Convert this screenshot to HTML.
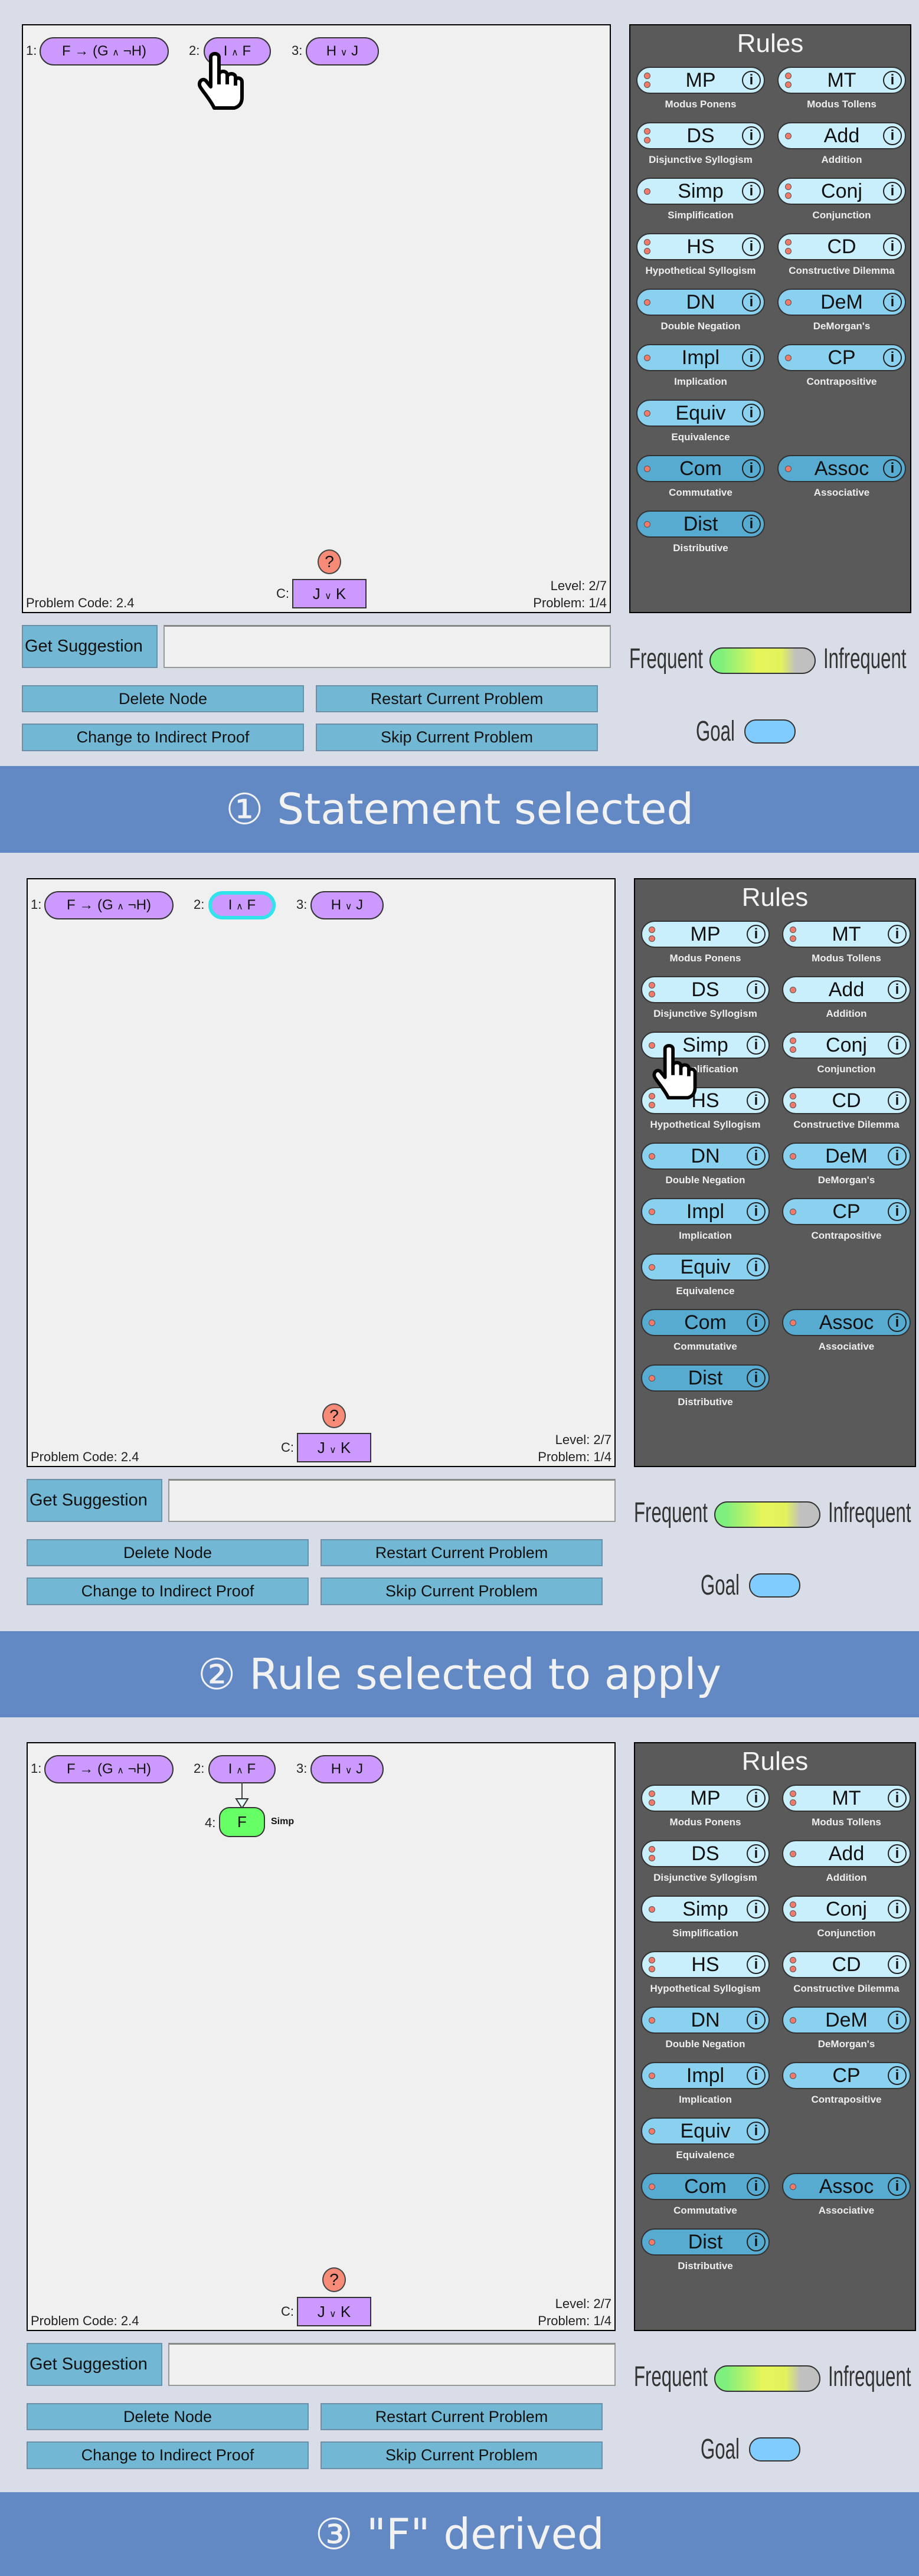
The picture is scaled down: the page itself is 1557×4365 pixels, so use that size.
<!DOCTYPE html>
<html><head><meta charset="utf-8"><style>
*{box-sizing:border-box;margin:0;padding:0}
body{width:1557px;height:4365px;background:#d8dde7;position:relative;overflow:hidden;font-family:"Liberation Sans",Arial,sans-serif;color:#111}
.p{position:absolute;width:1520px;height:1240px}
.cv{position:absolute;left:0;top:0;width:998px;height:998px;background:#f0f0f0;border:2px solid #000}
.rp{position:absolute;left:1029px;top:0;width:478px;height:998px;background:#5a5a5a;border:2px solid #000}
.ttl{position:absolute;left:0;width:100%;top:6px;text-align:center;color:#f4f4f4;font-size:44px}
.rb{position:absolute;width:218px;height:46px;border:2px solid #333;border-radius:23px;background:#c9eefc;text-align:center;font-size:34px;line-height:42px}
.m{background:#89d1ef}.d{background:#57abd0}
.dt{position:absolute;left:11px;width:11px;height:11px;border-radius:50%;background:#f27a6a;border:1.5px solid #555}
.i{position:absolute;right:5px;top:5px;width:32px;height:32px;border:2px solid #222;border-radius:50%;font-size:24px;line-height:28px;text-align:center;font-weight:bold}
.rl{position:absolute;width:218px;text-align:center;color:#eee;font-size:17px;font-weight:bold;white-space:nowrap}
.nd{position:absolute;top:20px;height:48px;border:2px solid #333;border-radius:24px;background:#cc99ff;font-size:24px;line-height:44px;text-align:center}
.lb{position:absolute;font-size:22px;color:#222}
.sm{font-size:16px}
.bt{position:absolute;background:#72b8d4;border:2px solid #6d8fa8;font-size:27px;text-align:center;line-height:42px}
.fq{position:absolute;font-size:48px;line-height:48px;color:#333;transform:scaleX(.65);transform-origin:left top;white-space:nowrap}
.bn{position:absolute;left:0;width:1557px;background:#6389c5;color:#f2f2f2;font-family:"DejaVu Sans",sans-serif;font-size:72px;text-align:center}
.hand{position:absolute}
</style></head><body>

<!-- PANEL TEMPLATE 1 -->
<div class="p" style="left:37px;top:41px">
<div class="cv">
<div class="lb" style="left:5px;top:30px">1:</div><div class="nd" style="left:28px;width:219px">F → (G <span class="sm">∧</span> ¬H)</div>
<div class="lb" style="left:281px;top:30px">2:</div><div class="nd" style="left:306px;width:114px">I <span class="sm">∧</span> F</div>
<div class="lb" style="left:455px;top:30px">3:</div><div class="nd" style="left:479px;width:124px">H <span class="sm">∨</span> J</div>
<div style="position:absolute;left:499px;top:888px;width:40px;height:42px;border-radius:50%;background:#f88a78;border:2px solid #444;text-align:center;font-size:28px;line-height:38px">?</div>
<div class="lb" style="left:429px;top:950px">C:</div>
<div style="position:absolute;left:456px;top:938px;width:126px;height:50px;background:#cc99ff;border:2px solid #333;text-align:center;font-size:26px;line-height:46px">J <span class="sm">∨</span> K</div>
<div class="lb" style="left:5px;top:966px">Problem Code: 2.4</div>
<div class="lb" style="right:5px;top:937px">Level: 2/7</div>
<div class="lb" style="right:5px;top:966px">Problem: 1/4</div>
</div>
<div class="rp">
<div class="ttl">Rules</div>
<div class="rb" style="left:10px;top:70px"><div class="dt" style="top:8px"></div><div class="dt" style="top:23px"></div>MP<div class="i">i</div></div><div class="rl" style="left:10px;top:124px">Modus Ponens</div>
<div class="rb" style="left:249px;top:70px"><div class="dt" style="top:8px"></div><div class="dt" style="top:23px"></div>MT<div class="i">i</div></div><div class="rl" style="left:249px;top:124px">Modus Tollens</div>
<div class="rb" style="left:10px;top:164px"><div class="dt" style="top:8px"></div><div class="dt" style="top:23px"></div>DS<div class="i">i</div></div><div class="rl" style="left:10px;top:218px">Disjunctive Syllogism</div>
<div class="rb" style="left:249px;top:164px"><div class="dt" style="top:16px"></div>Add<div class="i">i</div></div><div class="rl" style="left:249px;top:218px">Addition</div>
<div class="rb" style="left:10px;top:258px"><div class="dt" style="top:16px"></div>Simp<div class="i">i</div></div><div class="rl" style="left:10px;top:312px">Simplification</div>
<div class="rb" style="left:249px;top:258px"><div class="dt" style="top:8px"></div><div class="dt" style="top:23px"></div>Conj<div class="i">i</div></div><div class="rl" style="left:249px;top:312px">Conjunction</div>
<div class="rb" style="left:10px;top:352px"><div class="dt" style="top:8px"></div><div class="dt" style="top:23px"></div>HS<div class="i">i</div></div><div class="rl" style="left:10px;top:406px">Hypothetical Syllogism</div>
<div class="rb" style="left:249px;top:352px"><div class="dt" style="top:8px"></div><div class="dt" style="top:23px"></div>CD<div class="i">i</div></div><div class="rl" style="left:249px;top:406px">Constructive Dilemma</div>
<div class="rb m" style="left:10px;top:446px"><div class="dt" style="top:16px"></div>DN<div class="i">i</div></div><div class="rl" style="left:10px;top:500px">Double Negation</div>
<div class="rb m" style="left:249px;top:446px"><div class="dt" style="top:16px"></div>DeM<div class="i">i</div></div><div class="rl" style="left:249px;top:500px">DeMorgan's</div>
<div class="rb m" style="left:10px;top:540px"><div class="dt" style="top:16px"></div>Impl<div class="i">i</div></div><div class="rl" style="left:10px;top:594px">Implication</div>
<div class="rb m" style="left:249px;top:540px"><div class="dt" style="top:16px"></div>CP<div class="i">i</div></div><div class="rl" style="left:249px;top:594px">Contrapositive</div>
<div class="rb m" style="left:10px;top:634px"><div class="dt" style="top:16px"></div>Equiv<div class="i">i</div></div><div class="rl" style="left:10px;top:688px">Equivalence</div>
<div class="rb d" style="left:10px;top:728px"><div class="dt" style="top:16px"></div>Com<div class="i">i</div></div><div class="rl" style="left:10px;top:782px">Commutative</div>
<div class="rb d" style="left:249px;top:728px"><div class="dt" style="top:16px"></div>Assoc<div class="i">i</div></div><div class="rl" style="left:249px;top:782px">Associative</div>
<div class="rb d" style="left:10px;top:822px"><div class="dt" style="top:16px"></div>Dist<div class="i">i</div></div><div class="rl" style="left:10px;top:876px">Distributive</div>
</div>
<div class="bt" style="left:0;top:1018px;width:230px;height:73px;line-height:69px;font-size:29px;text-align:left;padding-left:3px">Get Suggestion</div>
<div style="position:absolute;left:240px;top:1018px;width:758px;height:73px;background:#f0f0f0;border:2px solid #999;border-top:3px solid #888"></div>
<div class="bt" style="left:0;top:1120px;width:478px;height:46px">Delete Node</div>
<div class="bt" style="left:498px;top:1120px;width:478px;height:46px">Restart Current Problem</div>
<div class="bt" style="left:0;top:1185px;width:478px;height:47px">Change to Indirect Proof</div>
<div class="bt" style="left:498px;top:1185px;width:478px;height:47px">Skip Current Problem</div>
<div class="fq" style="left:1029px;top:1052px">Frequent</div>
<div style="position:absolute;left:1165px;top:1056px;width:180px;height:45px;border:2px solid #333;border-radius:23px;background:linear-gradient(to right,#7ef07e 10%,#e6f55a 45%,#e2f25c 68%,#c0c0c0 82%)"></div>
<div class="fq" style="left:1358px;top:1052px">Infrequent</div>
<div class="fq" style="left:1142px;top:1175px">Goal</div>
<div style="position:absolute;left:1224px;top:1178px;width:87px;height:41px;background:#80ccff;border:2px solid #333;border-radius:20px"></div>
<svg class="hand" style="left:296px;top:46px" width="82" height="100" viewBox="0 0 82 100"><path d="M24,10 C24,2 38,2 38,10 L38,40 C38,32 52,32 52,40 L52,44 C52,36 66,36 66,44 L66,50 C66,43 77,44 77,52 L77,78 C77,88 72,94 64,96 L30,96 C22,80 12,70 6,60 C2,52 10,44 16,50 L24,60 Z M38,40 L38,56 M52,44 L52,56 M66,50 L66,58" fill="#fff" stroke="#000" stroke-width="6" stroke-linejoin="round"/></svg>
</div>

<div class="bn" style="top:1298px;height:147px;line-height:147px">① Statement selected</div>

<!-- PANEL 2 -->
<div class="p" style="left:45px;top:1488px">
<div class="cv">
<div class="lb" style="left:5px;top:30px">1:</div><div class="nd" style="left:28px;width:219px">F → (G <span class="sm">∧</span> ¬H)</div>
<div class="lb" style="left:281px;top:30px">2:</div><div class="nd" style="left:306px;width:114px;border:6px solid #33e3ec;line-height:36px">I <span class="sm">∧</span> F</div>
<div class="lb" style="left:455px;top:30px">3:</div><div class="nd" style="left:479px;width:124px">H <span class="sm">∨</span> J</div>
<div style="position:absolute;left:499px;top:888px;width:40px;height:42px;border-radius:50%;background:#f88a78;border:2px solid #444;text-align:center;font-size:28px;line-height:38px">?</div>
<div class="lb" style="left:429px;top:950px">C:</div>
<div style="position:absolute;left:456px;top:938px;width:126px;height:50px;background:#cc99ff;border:2px solid #333;text-align:center;font-size:26px;line-height:46px">J <span class="sm">∨</span> K</div>
<div class="lb" style="left:5px;top:966px">Problem Code: 2.4</div>
<div class="lb" style="right:5px;top:937px">Level: 2/7</div>
<div class="lb" style="right:5px;top:966px">Problem: 1/4</div>
</div>
<div class="rp">
<div class="ttl">Rules</div>
<div class="rb" style="left:10px;top:70px"><div class="dt" style="top:8px"></div><div class="dt" style="top:23px"></div>MP<div class="i">i</div></div><div class="rl" style="left:10px;top:124px">Modus Ponens</div>
<div class="rb" style="left:249px;top:70px"><div class="dt" style="top:8px"></div><div class="dt" style="top:23px"></div>MT<div class="i">i</div></div><div class="rl" style="left:249px;top:124px">Modus Tollens</div>
<div class="rb" style="left:10px;top:164px"><div class="dt" style="top:8px"></div><div class="dt" style="top:23px"></div>DS<div class="i">i</div></div><div class="rl" style="left:10px;top:218px">Disjunctive Syllogism</div>
<div class="rb" style="left:249px;top:164px"><div class="dt" style="top:16px"></div>Add<div class="i">i</div></div><div class="rl" style="left:249px;top:218px">Addition</div>
<div class="rb" style="left:10px;top:258px"><div class="dt" style="top:16px"></div>Simp<div class="i">i</div></div><div class="rl" style="left:10px;top:312px">Simplification</div>
<div class="rb" style="left:249px;top:258px"><div class="dt" style="top:8px"></div><div class="dt" style="top:23px"></div>Conj<div class="i">i</div></div><div class="rl" style="left:249px;top:312px">Conjunction</div>
<div class="rb" style="left:10px;top:352px"><div class="dt" style="top:8px"></div><div class="dt" style="top:23px"></div>HS<div class="i">i</div></div><div class="rl" style="left:10px;top:406px">Hypothetical Syllogism</div>
<div class="rb" style="left:249px;top:352px"><div class="dt" style="top:8px"></div><div class="dt" style="top:23px"></div>CD<div class="i">i</div></div><div class="rl" style="left:249px;top:406px">Constructive Dilemma</div>
<div class="rb m" style="left:10px;top:446px"><div class="dt" style="top:16px"></div>DN<div class="i">i</div></div><div class="rl" style="left:10px;top:500px">Double Negation</div>
<div class="rb m" style="left:249px;top:446px"><div class="dt" style="top:16px"></div>DeM<div class="i">i</div></div><div class="rl" style="left:249px;top:500px">DeMorgan's</div>
<div class="rb m" style="left:10px;top:540px"><div class="dt" style="top:16px"></div>Impl<div class="i">i</div></div><div class="rl" style="left:10px;top:594px">Implication</div>
<div class="rb m" style="left:249px;top:540px"><div class="dt" style="top:16px"></div>CP<div class="i">i</div></div><div class="rl" style="left:249px;top:594px">Contrapositive</div>
<div class="rb m" style="left:10px;top:634px"><div class="dt" style="top:16px"></div>Equiv<div class="i">i</div></div><div class="rl" style="left:10px;top:688px">Equivalence</div>
<div class="rb d" style="left:10px;top:728px"><div class="dt" style="top:16px"></div>Com<div class="i">i</div></div><div class="rl" style="left:10px;top:782px">Commutative</div>
<div class="rb d" style="left:249px;top:728px"><div class="dt" style="top:16px"></div>Assoc<div class="i">i</div></div><div class="rl" style="left:249px;top:782px">Associative</div>
<div class="rb d" style="left:10px;top:822px"><div class="dt" style="top:16px"></div>Dist<div class="i">i</div></div><div class="rl" style="left:10px;top:876px">Distributive</div>
</div>
<div class="bt" style="left:0;top:1018px;width:230px;height:73px;line-height:69px;font-size:29px;text-align:left;padding-left:3px">Get Suggestion</div>
<div style="position:absolute;left:240px;top:1018px;width:758px;height:73px;background:#f0f0f0;border:2px solid #999;border-top:3px solid #888"></div>
<div class="bt" style="left:0;top:1120px;width:478px;height:46px">Delete Node</div>
<div class="bt" style="left:498px;top:1120px;width:478px;height:46px">Restart Current Problem</div>
<div class="bt" style="left:0;top:1185px;width:478px;height:47px">Change to Indirect Proof</div>
<div class="bt" style="left:498px;top:1185px;width:478px;height:47px">Skip Current Problem</div>
<div class="fq" style="left:1029px;top:1052px">Frequent</div>
<div style="position:absolute;left:1165px;top:1056px;width:180px;height:45px;border:2px solid #333;border-radius:23px;background:linear-gradient(to right,#7ef07e 10%,#e6f55a 45%,#e2f25c 68%,#c0c0c0 82%)"></div>
<div class="fq" style="left:1358px;top:1052px">Infrequent</div>
<div class="fq" style="left:1142px;top:1175px">Goal</div>
<div style="position:absolute;left:1224px;top:1178px;width:87px;height:41px;background:#80ccff;border:2px solid #333;border-radius:20px"></div>
<svg class="hand" style="left:1057px;top:280px" width="82" height="96" viewBox="0 0 82 100"><path d="M24,10 C24,2 38,2 38,10 L38,40 C38,32 52,32 52,40 L52,44 C52,36 66,36 66,44 L66,50 C66,43 77,44 77,52 L77,78 C77,88 72,94 64,96 L30,96 C22,80 12,70 6,60 C2,52 10,44 16,50 L24,60 Z M38,40 L38,56 M52,44 L52,56 M66,50 L66,58" fill="#fff" stroke="#000" stroke-width="6" stroke-linejoin="round"/></svg>
</div>

<div class="bn" style="top:2764px;height:146px;line-height:146px">② Rule selected to apply</div>

<!-- PANEL 3 -->
<div class="p" style="left:45px;top:2952px">
<div class="cv">
<div class="lb" style="left:5px;top:30px">1:</div><div class="nd" style="left:28px;width:219px">F → (G <span class="sm">∧</span> ¬H)</div>
<div class="lb" style="left:281px;top:30px">2:</div><div class="nd" style="left:306px;width:114px">I <span class="sm">∧</span> F</div>
<div class="lb" style="left:455px;top:30px">3:</div><div class="nd" style="left:479px;width:124px">H <span class="sm">∨</span> J</div>
<svg style="position:absolute;left:340px;top:66px" width="50" height="48" viewBox="0 0 50 48"><line x1="23" y1="0" x2="23" y2="28" stroke="#444" stroke-width="2"/><path d="M13,28 L33,28 L23,44 Z" fill="#e8ffff" stroke="#333" stroke-width="2"/></svg>
<div class="lb" style="left:300px;top:122px">4:</div>
<div style="position:absolute;left:324px;top:108px;width:78px;height:51px;border:2px solid #333;border-radius:18px;background:#66ff66;text-align:center;font-size:26px;line-height:47px">F</div>
<div style="position:absolute;left:412px;top:124px;font-size:16px;font-weight:bold">Simp</div>
<div style="position:absolute;left:499px;top:888px;width:40px;height:42px;border-radius:50%;background:#f88a78;border:2px solid #444;text-align:center;font-size:28px;line-height:38px">?</div>
<div class="lb" style="left:429px;top:950px">C:</div>
<div style="position:absolute;left:456px;top:938px;width:126px;height:50px;background:#cc99ff;border:2px solid #333;text-align:center;font-size:26px;line-height:46px">J <span class="sm">∨</span> K</div>
<div class="lb" style="left:5px;top:966px">Problem Code: 2.4</div>
<div class="lb" style="right:5px;top:937px">Level: 2/7</div>
<div class="lb" style="right:5px;top:966px">Problem: 1/4</div>
</div>
<div class="rp">
<div class="ttl">Rules</div>
<div class="rb" style="left:10px;top:70px"><div class="dt" style="top:8px"></div><div class="dt" style="top:23px"></div>MP<div class="i">i</div></div><div class="rl" style="left:10px;top:124px">Modus Ponens</div>
<div class="rb" style="left:249px;top:70px"><div class="dt" style="top:8px"></div><div class="dt" style="top:23px"></div>MT<div class="i">i</div></div><div class="rl" style="left:249px;top:124px">Modus Tollens</div>
<div class="rb" style="left:10px;top:164px"><div class="dt" style="top:8px"></div><div class="dt" style="top:23px"></div>DS<div class="i">i</div></div><div class="rl" style="left:10px;top:218px">Disjunctive Syllogism</div>
<div class="rb" style="left:249px;top:164px"><div class="dt" style="top:16px"></div>Add<div class="i">i</div></div><div class="rl" style="left:249px;top:218px">Addition</div>
<div class="rb" style="left:10px;top:258px"><div class="dt" style="top:16px"></div>Simp<div class="i">i</div></div><div class="rl" style="left:10px;top:312px">Simplification</div>
<div class="rb" style="left:249px;top:258px"><div class="dt" style="top:8px"></div><div class="dt" style="top:23px"></div>Conj<div class="i">i</div></div><div class="rl" style="left:249px;top:312px">Conjunction</div>
<div class="rb" style="left:10px;top:352px"><div class="dt" style="top:8px"></div><div class="dt" style="top:23px"></div>HS<div class="i">i</div></div><div class="rl" style="left:10px;top:406px">Hypothetical Syllogism</div>
<div class="rb" style="left:249px;top:352px"><div class="dt" style="top:8px"></div><div class="dt" style="top:23px"></div>CD<div class="i">i</div></div><div class="rl" style="left:249px;top:406px">Constructive Dilemma</div>
<div class="rb m" style="left:10px;top:446px"><div class="dt" style="top:16px"></div>DN<div class="i">i</div></div><div class="rl" style="left:10px;top:500px">Double Negation</div>
<div class="rb m" style="left:249px;top:446px"><div class="dt" style="top:16px"></div>DeM<div class="i">i</div></div><div class="rl" style="left:249px;top:500px">DeMorgan's</div>
<div class="rb m" style="left:10px;top:540px"><div class="dt" style="top:16px"></div>Impl<div class="i">i</div></div><div class="rl" style="left:10px;top:594px">Implication</div>
<div class="rb m" style="left:249px;top:540px"><div class="dt" style="top:16px"></div>CP<div class="i">i</div></div><div class="rl" style="left:249px;top:594px">Contrapositive</div>
<div class="rb m" style="left:10px;top:634px"><div class="dt" style="top:16px"></div>Equiv<div class="i">i</div></div><div class="rl" style="left:10px;top:688px">Equivalence</div>
<div class="rb d" style="left:10px;top:728px"><div class="dt" style="top:16px"></div>Com<div class="i">i</div></div><div class="rl" style="left:10px;top:782px">Commutative</div>
<div class="rb d" style="left:249px;top:728px"><div class="dt" style="top:16px"></div>Assoc<div class="i">i</div></div><div class="rl" style="left:249px;top:782px">Associative</div>
<div class="rb d" style="left:10px;top:822px"><div class="dt" style="top:16px"></div>Dist<div class="i">i</div></div><div class="rl" style="left:10px;top:876px">Distributive</div>
</div>
<div class="bt" style="left:0;top:1018px;width:230px;height:73px;line-height:69px;font-size:29px;text-align:left;padding-left:3px">Get Suggestion</div>
<div style="position:absolute;left:240px;top:1018px;width:758px;height:73px;background:#f0f0f0;border:2px solid #999;border-top:3px solid #888"></div>
<div class="bt" style="left:0;top:1120px;width:478px;height:46px">Delete Node</div>
<div class="bt" style="left:498px;top:1120px;width:478px;height:46px">Restart Current Problem</div>
<div class="bt" style="left:0;top:1185px;width:478px;height:47px">Change to Indirect Proof</div>
<div class="bt" style="left:498px;top:1185px;width:478px;height:47px">Skip Current Problem</div>
<div class="fq" style="left:1029px;top:1052px">Frequent</div>
<div style="position:absolute;left:1165px;top:1056px;width:180px;height:45px;border:2px solid #333;border-radius:23px;background:linear-gradient(to right,#7ef07e 10%,#e6f55a 45%,#e2f25c 68%,#c0c0c0 82%)"></div>
<div class="fq" style="left:1358px;top:1052px">Infrequent</div>
<div class="fq" style="left:1142px;top:1175px">Goal</div>
<div style="position:absolute;left:1224px;top:1178px;width:87px;height:41px;background:#80ccff;border:2px solid #333;border-radius:20px"></div>
</div>

<div class="bn" style="top:4223px;height:142px;line-height:142px">③ "F" derived</div>
</body></html>
